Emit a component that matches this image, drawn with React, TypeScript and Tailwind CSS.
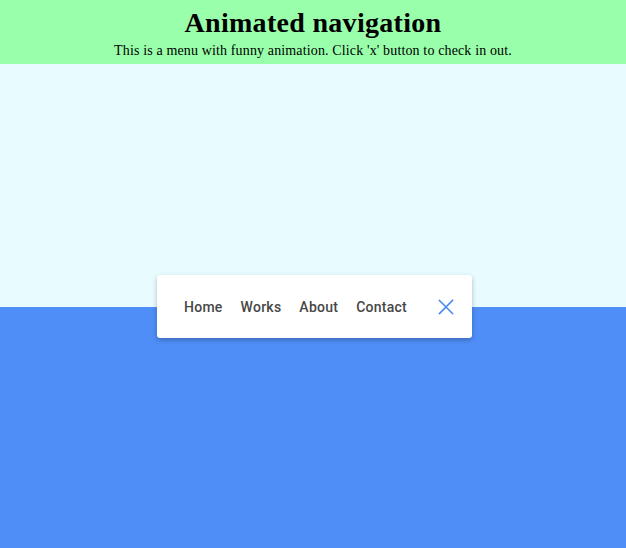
import React from "react";

export default function App() {
  return (
    <div className="w-[626px] h-[548px] flex flex-col overflow-hidden" style={{ fontFamily: '"Liberation Serif", serif' }}>
      <header className="h-16 shrink-0 bg-[#99ffaa] flex flex-col items-center text-black">
        <h1 className="text-[28px] font-bold leading-none mt-[9px] tracking-[0.3px]">Animated navigation</h1>
        <p className="text-[14px] leading-none mt-[7px] tracking-[0.14px]">This is a menu with funny animation. Click 'x' button to check in out.</p>
      </header>
      <main className="relative flex-1 flex flex-col">
        <div className="h-[243px] bg-[#e8fcff]" />
        <div className="flex-1 bg-[#4f8ef7]" />
        <nav
          className="absolute left-[157px] top-[211px] w-[315px] h-[63px] bg-white rounded-[3px] shadow-[0_2px_5px_rgba(0,0,0,0.26)] flex items-center pl-[27px] pr-[18px]"
          style={{ fontFamily: 'Roboto, "Noto Sans", sans-serif' }}
        >
          <ul className="flex items-center gap-[18px] text-[14px] font-medium text-[#474747] tracking-[0.25px] pt-[2px]">
            <li>Home</li>
            <li>Works</li>
            <li>About</li>
            <li>Contact</li>
          </ul>
          <button className="ml-auto w-4 h-4 flex items-center justify-center">
            <svg width="16" height="16" viewBox="0 0 16 16" fill="none" stroke="#4a8af4" strokeWidth="1.6" strokeLinecap="square">
              <path d="M1.5 1.5 L14.5 14.5 M14.5 1.5 L1.5 14.5" />
            </svg>
          </button>
        </nav>
      </main>
    </div>
  );
}
